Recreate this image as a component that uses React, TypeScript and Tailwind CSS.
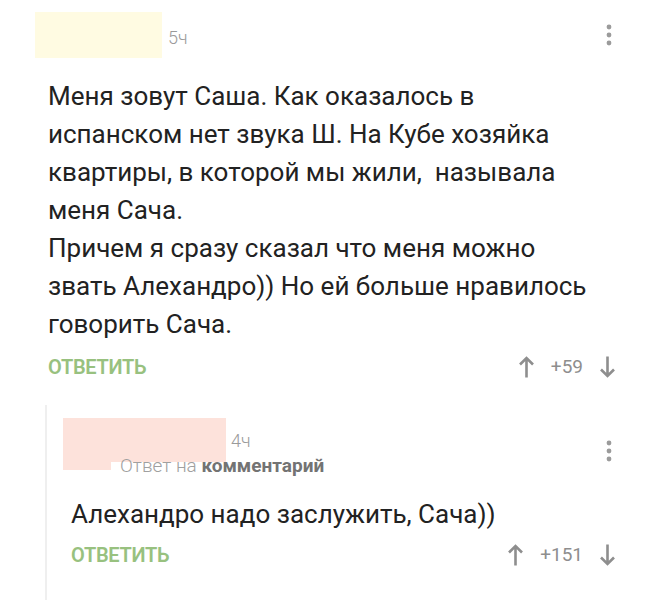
import React from 'react'

const Dots = () => (
    <svg width="8" height="22" viewBox="0 0 8 22" className="text-[#9b9b9b]">
        <circle cx="4" cy="3" r="2.4" fill="currentColor" />
        <circle cx="4" cy="11" r="2.4" fill="currentColor" />
        <circle cx="4" cy="19" r="2.4" fill="currentColor" />
    </svg>
)

const Arrow = ({ down = false }: { down?: boolean }) => (
    <svg width="17" height="22" viewBox="0 0 17 22" className={down ? 'rotate-180' : ''}>
        <path d="M8.5 21.5V2M2 8.5l6.5-6.5 6.5 6.5" fill="none" stroke="#8e8e8e" strokeWidth="2.6" />
    </svg>
)

const Actions = ({ score }: { score: string }) => (
    <div className="flex items-center justify-between h-[30px]">
        <span className="text-[20px] font-semibold tracking-[-0.3px] text-[#98c17f] uppercase">Ответить</span>
        <div className="flex items-center text-[#8e8e8e]">
            <Arrow />
            <span className="text-[19px] mx-[16px]">{score}</span>
            <Arrow down />
        </div>
    </div>
)

export default function App() {
    return (
        <div className="w-[654px] h-[600px] bg-white overflow-hidden font-['Roboto',sans-serif] text-[#222]">
            <div className="flex items-center justify-between pt-[12px] pl-[35px] pr-[41px]">
                <div className="flex items-center">
                    <div className="w-[127px] h-[46px] bg-[#fffbe2]" />
                    <span className="ml-[6px] mt-[4px] text-[18px] font-light text-[#9a9a9a]">5ч</span>
                </div>
                <Dots />
            </div>

            <div className="pl-[48px] pr-[38px]">
                <p className="mt-[19px] text-[26px] leading-[38px]">
                    Меня зовут Саша. Как оказалось в<br />
                    испанском нет звука Ш. На Кубе хозяйка<br />
                    квартиры, в которой мы жили,&nbsp; называла<br />
                    меня Сача.<br />
                    Причем я сразу сказал что меня можно<br />
                    звать Алехандро)) Но ей больше нравилось<br />
                    говорить Сача.
                </p>
                <div className="mt-[9px]">
                    <Actions score="+59" />
                </div>
            </div>

            <div className="ml-[45px] mt-[23px] border-l-2 border-[#efefef] pr-[38px] pb-[40px]">
                <div className="flex items-start justify-between pt-[13px] pl-[16px] pr-[3px]">
                    <div>
                        <div className="flex items-center">
                            <div className="w-[163px] h-[44px] bg-[#fde2db]" />
                            <span className="ml-[5px] text-[18px] font-light text-[#9a9a9a]">4ч</span>
                        </div>
                        <div className="flex items-start">
                            <div className="w-[48px] h-[8px] bg-[#fde2db]" />
                            <span className="ml-[9px] -mt-[7px] text-[19px] leading-[22px] font-light text-[#a0a0a0]">
                                Ответ на <span className="font-bold text-[#737373]">комментарий</span>
                            </span>
                        </div>
                    </div>
                    <div className="mt-[22px]">
                        <Dots />
                    </div>
                </div>
                <div className="pl-[24px]">
                    <p className="mt-[18px] text-[26px] leading-[38px]">Алехандро надо заслужить, Сача))</p>
                    <div className="mt-[7px]">
                        <Actions score="+151" />
                    </div>
                </div>
            </div>
        </div>
    )
}
